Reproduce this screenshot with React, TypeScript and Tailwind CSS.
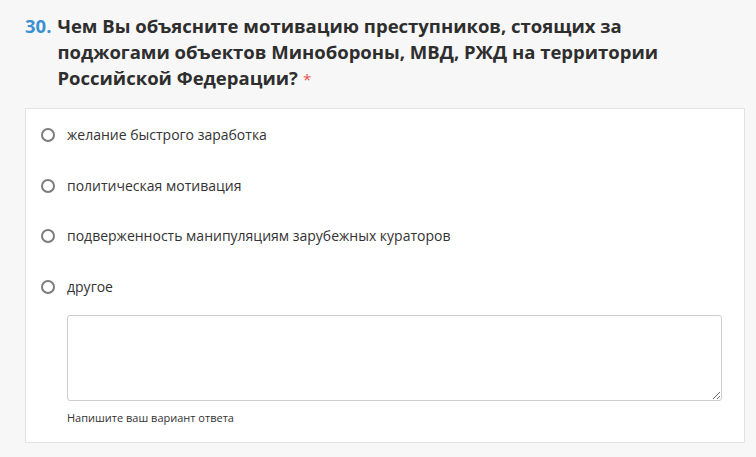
import { useState } from "react";

const options = [
  "желание быстрого заработка",
  "политическая мотивация",
  "подверженность манипуляциям зарубежных кураторов",
  "другое",
];

export default function App() {
  const [picked, setPicked] = useState<number | null>(null);

  return (
    <div className="min-h-[457px] w-[756px] bg-[#f7f7f7] font-['Open_Sans',sans-serif] text-[#333]">
      <div className="flex gap-[6px] pl-[25px] pt-[13px]">
        <span className="shrink-0 text-[18.5px] font-bold leading-[26px] text-[#3b8fd3]">30.</span>
        <h2 className="w-[628px] text-[18.5px] font-bold leading-[26px] text-[#2e2e2e]">
          Чем Вы объясните мотивацию преступников, стоящих за поджогами объектов Минобороны, МВД, РЖД на территории
          Российской Федерации?<span className="ml-[5px] text-[15px] font-normal text-[#e5534b]">*</span>
        </h2>
      </div>

      <div className="ml-[25px] mr-[11px] mt-[16px] border border-[#e3e3e3] bg-white pb-[16px] pl-[15px] pr-[22px] pt-[16px]">
        <div className="flex flex-col gap-[30.5px]">
          {options.map((label, i) => (
            <label key={label} className="flex cursor-pointer items-center gap-[12px]">
              <span
                onClick={() => setPicked(i)}
                className="flex h-[14px] w-[14px] shrink-0 items-center justify-center rounded-full border-2 border-[#7b7b82]"
              >
                {picked === i && <span className="h-[6px] w-[6px] rounded-full bg-[#3b8fd3]" />}
              </span>
              <span className="text-[14px] leading-[20px] text-[#333]">{label}</span>
            </label>
          ))}
        </div>

        <div className="mt-[18px] pl-[26px]">
          <textarea className="block h-[86px] w-full resize-y rounded-[3px] border border-[#cdcdcd] bg-white outline-none" />
          <p className="mt-[9px] text-[11px] leading-[16px] text-[#333]">Напишите ваш вариант ответа</p>
        </div>
      </div>
    </div>
  );
}
